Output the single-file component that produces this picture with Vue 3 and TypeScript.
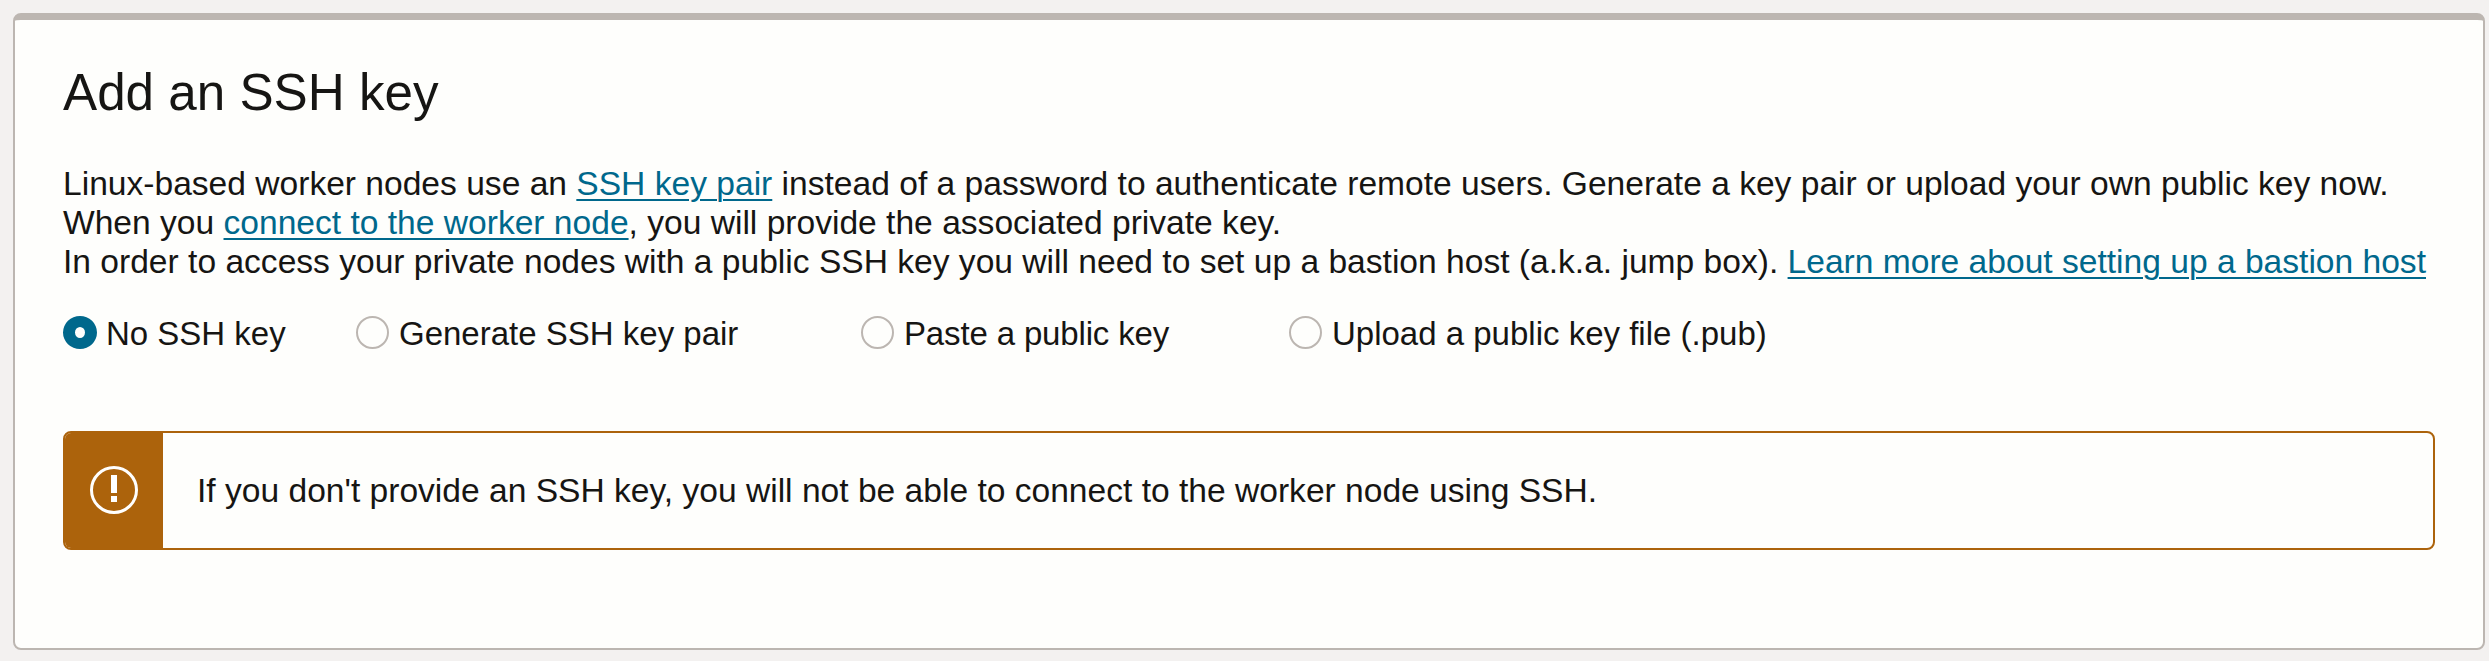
<script setup lang="ts">
interface KeyOption { label: string; name: string }
const options: KeyOption[] = [
  { label: 'No SSH key', name: 'none' },
  { label: 'Generate SSH key pair', name: 'generate' },
  { label: 'Paste a public key', name: 'paste' },
  { label: 'Upload a public key file (.pub)', name: 'upload' },
]
const selected = 'none'
</script>

<template>
  <main class="page">
    <section class="panel">
      <h1>Add an SSH key</h1>
      <div class="copy">
        <div>Linux-based worker nodes use an <a>SSH key pair</a> instead of a password to authenticate remote users. Generate a key pair or upload your own public key now.</div>
        <div>When you <a>connect to the worker node</a>, you will provide the associated private key.</div>
        <div>In order to access your private nodes with a public SSH key you will need to set up a bastion host (a.k.a. jump box). <a>Learn more about setting up a bastion host</a></div>
      </div>
      <div class="options">
        <div v-for="o in options" :key="o.name" class="option" :class="o.name">
          <span class="radio" :class="{ on: o.name === selected }"></span>
          <span class="label">{{ o.label }}</span>
        </div>
      </div>
      <div class="alert">
        <div class="badge">
          <svg width="48" height="48" viewBox="0 0 48 48"><circle cx="24" cy="24" r="22.5" fill="none" stroke="#fff" stroke-width="3" /><path d="M21 9h6v18h-6zM21 30h6v6h-6z" fill="#fff" /></svg>
        </div>
        <p>If you don't provide an SSH key, you will not be able to connect to the worker node using SSH.</p>
      </div>
    </section>
  </main>
</template>

<style>
body { margin: 0; background: #f3f1f0; }
</style>
<style scoped>
.page { box-sizing: border-box; height: 661px; padding: 13px 4px 11px 13px; background: #f3f1f0; font-family: "Liberation Sans", Arial, sans-serif; color: #161513; overflow: hidden; }
.panel { box-sizing: border-box; height: 637px; border: 2px solid #bcb6b1; border-top-width: 7px; border-radius: 8px; background: #fefefc; padding: 41px 48px 0; }
h1 { margin: 0; font-size: 51.2px; line-height: 63px; font-weight: 400; white-space: nowrap; }
.copy { margin-top: 40px; font-size: 33.6px; line-height: 39px; white-space: nowrap; }
a { color: #00688c; text-decoration: underline; text-decoration-thickness: 2px; text-underline-offset: 4px; }
.options { display: flex; margin-top: 33px; font-size: 33px; line-height: 40px; white-space: nowrap; }
.option { display: flex; align-items: flex-start; gap: 10px; }
.none { width: 293px; gap: 9px; }
.generate { width: 505px; }
.paste { width: 428px; }
.paste .label { letter-spacing: -0.15px; }
.radio { box-sizing: border-box; width: 33px; height: 33px; margin-top: 2px; border: 2px solid #bcb6b1; border-radius: 50%; background: #fefefc; }
.radio.on { width: 34px; border-width: 11.5px 12px; border-color: #00688c; }
.alert { box-sizing: border-box; display: flex; height: 119px; margin-top: 77px; border: 2px solid #ac630c; border-radius: 8px; }
.badge { box-sizing: border-box; width: 98px; padding: 33px 25px 0; background: #ac630c; border-radius: 6px 0 0 6px; }
.badge svg { display: block; }
.alert p { margin: 0 0 0 34px; font-size: 33.6px; line-height: 115px; white-space: nowrap; }
</style>
